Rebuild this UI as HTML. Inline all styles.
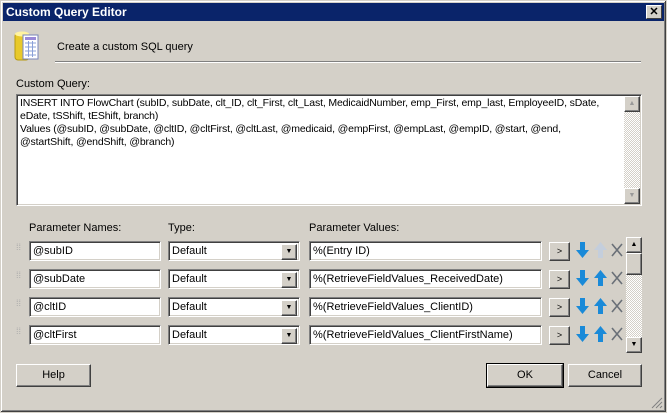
<!DOCTYPE html>
<html><head><meta charset="utf-8"><style>
*{box-sizing:border-box;margin:0;padding:0}
body{width:667px;height:413px;background:#d4d0c8;font:11px "Liberation Sans",Arial,sans-serif;color:#000;position:relative;overflow:hidden}
.a{position:absolute}
.win{position:absolute;left:0;top:0;width:667px;height:413px;border:1px solid #d4d0c8;box-shadow:inset -1px -1px #404040,inset 1px 1px #fff,inset -2px -2px #808080}
.title{left:3px;top:3px;width:661px;height:18px;background:#0a246a;color:#fff;font-weight:bold;font-size:12px;line-height:18px;padding-left:3px}
.close{right:5px;top:5px;width:16px;height:14px;background:#d4d0c8;border:1px solid;border-color:#fff #404040 #404040 #fff;color:#000;font-size:11px;line-height:12px;text-align:center;font-weight:bold}
.sunk{background:#fff;border:1px solid;border-color:#808080 #fff #fff #808080;box-shadow:inset 1px 1px #404040,inset -1px -1px #d4d0c8}
.btn{background:#d4d0c8;border:1px solid;border-color:#fff #404040 #404040 #fff;box-shadow:inset -1px -1px #808080;text-align:center}
.inp{height:20px;line-height:18px;padding-left:3px;font-size:11px}
.dd{position:absolute;right:2px;top:2px;width:16px;height:16px}
.sb{background:repeating-conic-gradient(#d4d0c8 0 25%,#fff 0 50%) 0 0/2px 2px}
.grip{color:#aaa;font-size:9px;line-height:4px;letter-spacing:0}
</style></head><body>
<div class="win"></div>
<div class="a title">Custom Query Editor</div>
<div class="a close">✕</div>
<svg class="a" style="left:13px;top:30px" width="34" height="34" viewBox="0 0 34 34">
<rect x="2" y="3" width="14" height="27" rx="3" fill="#e8c92a" stroke="#b89a10"/>
<ellipse cx="9" cy="4" rx="7" ry="2.5" fill="#fff3a0"/>
<rect x="10" y="5" width="15" height="24" fill="#fff" stroke="#7a86b8"/>
<rect x="12" y="7" width="11" height="3" fill="#9a8ad8"/>
<g stroke="#8aa0d8" stroke-width="1"><line x1="12" y1="13" x2="23" y2="13"/><line x1="12" y1="17" x2="23" y2="17"/><line x1="12" y1="21" x2="23" y2="21"/><line x1="12" y1="25" x2="23" y2="25"/><line x1="15.5" y1="11" x2="15.5" y2="27"/><line x1="19.5" y1="11" x2="19.5" y2="27"/></g>
</svg>
<div class="a" style="left:57px;top:41px">Create a custom SQL query</div>
<div class="a" style="left:55px;top:61px;width:586px;height:2px;border-top:1px solid #808080;border-bottom:1px solid #fff"></div>
<div class="a" style="left:16px;top:78px">Custom Query:</div>
<div class="a sunk" style="left:16px;top:94px;width:626px;height:112px;padding:2px 3px;line-height:13px;font-size:10.5px;letter-spacing:-0.15px;white-space:nowrap">INSERT INTO FlowChart (subID, subDate, clt_ID, clt_First, clt_Last, MedicaidNumber, emp_First, emp_last, EmployeeID, sDate,<br>eDate, tSShift, tEShift, branch)<br>Values (@subID, @subDate, @cltID, @cltFirst, @cltLast, @medicaid, @empFirst, @empLast, @empID, @start, @end,<br>@startShift, @endShift, @branch)</div>
<div class="a sb" style="left:624px;top:96px;width:16px;height:108px"></div>
<div class="a btn" style="left:624px;top:96px;width:16px;height:16px;font-size:7px;line-height:14px;color:#999">▲</div>
<div class="a btn" style="left:624px;top:188px;width:16px;height:16px;font-size:7px;line-height:14px;color:#999">▼</div>

<div class="a" style="left:29px;top:222px">Parameter Names:</div>
<div class="a" style="left:168px;top:222px">Type:</div>
<div class="a" style="left:309px;top:222px">Parameter Values:</div>

<div class="a sb" style="left:626px;top:237px;width:16px;height:116px"></div>
<div class="a btn" style="left:626px;top:237px;width:16px;height:16px;font-size:7px;line-height:14px">▲</div>
<div class="a btn" style="left:626px;top:253px;width:16px;height:22px"></div>
<div class="a btn" style="left:626px;top:337px;width:16px;height:16px;font-size:7px;line-height:14px">▼</div>

<div class="a grip" style="left:16px;top:245px">⁞⁞</div>
<div class="a sunk inp" style="left:29px;top:241px;width:132px">@subID</div>
<div class="a sunk inp" style="left:168px;top:241px;width:132px">Default<div class="dd btn" style="font-size:7px;line-height:14px">▼</div></div>
<div class="a sunk inp" style="left:309px;top:241px;width:233px">%(Entry ID)</div>
<div class="a btn" style="left:549px;top:242px;width:21px;height:19px;font-size:9px;line-height:17px">&gt;</div>

<div class="a grip" style="left:16px;top:273px">⁞⁞</div>
<div class="a sunk inp" style="left:29px;top:269px;width:132px">@subDate</div>
<div class="a sunk inp" style="left:168px;top:269px;width:132px">Default<div class="dd btn" style="font-size:7px;line-height:14px">▼</div></div>
<div class="a sunk inp" style="left:309px;top:269px;width:233px">%(RetrieveFieldValues_ReceivedDate)</div>
<div class="a btn" style="left:549px;top:270px;width:21px;height:19px;font-size:9px;line-height:17px">&gt;</div>

<div class="a grip" style="left:16px;top:301px">⁞⁞</div>
<div class="a sunk inp" style="left:29px;top:297px;width:132px">@cltID</div>
<div class="a sunk inp" style="left:168px;top:297px;width:132px">Default<div class="dd btn" style="font-size:7px;line-height:14px">▼</div></div>
<div class="a sunk inp" style="left:309px;top:297px;width:233px">%(RetrieveFieldValues_ClientID)</div>
<div class="a btn" style="left:549px;top:298px;width:21px;height:19px;font-size:9px;line-height:17px">&gt;</div>

<div class="a grip" style="left:16px;top:329px">⁞⁞</div>
<div class="a sunk inp" style="left:29px;top:325px;width:132px">@cltFirst</div>
<div class="a sunk inp" style="left:168px;top:325px;width:132px">Default<div class="dd btn" style="font-size:7px;line-height:14px">▼</div></div>
<div class="a sunk inp" style="left:309px;top:325px;width:233px">%(RetrieveFieldValues_ClientFirstName)</div>
<div class="a btn" style="left:549px;top:326px;width:21px;height:19px;font-size:9px;line-height:17px">&gt;</div>

<svg class="a" style="left:572px;top:240px" width="54" height="112" viewBox="0 0 54 112">
<g fill="#1a8ad8">
<path d="M8 2 h5 v8 h4 l-6.5 8 l-6.5 -8 h4 z"/><path d="M26 18 h5 v-8 h4 l-6.5 -8 l-6.5 8 h4 z" fill="#c4cedc"/>
<path d="M8 30 h5 v8 h4 l-6.5 8 l-6.5 -8 h4 z"/><path d="M26 46 h5 v-8 h4 l-6.5 -8 l-6.5 8 h4 z"/>
<path d="M8 58 h5 v8 h4 l-6.5 8 l-6.5 -8 h4 z"/><path d="M26 74 h5 v-8 h4 l-6.5 -8 l-6.5 8 h4 z"/>
<path d="M8 86 h5 v8 h4 l-6.5 8 l-6.5 -8 h4 z"/><path d="M26 102 h5 v-8 h4 l-6.5 -8 l-6.5 8 h4 z"/>
</g>
<g stroke="#6a7078" stroke-width="1.6" fill="none">
<path d="M40 4 L50 16 M50 4 L40 16"/>
<path d="M40 32 L50 44 M50 32 L40 44"/>
<path d="M40 60 L50 72 M50 60 L40 72"/>
<path d="M40 88 L50 100 M50 88 L40 100"/>
</g>
</svg>

<div class="a btn" style="left:16px;top:364px;width:75px;height:23px;line-height:21px">Help</div>
<div class="a btn" style="left:487px;top:364px;width:76px;height:23px;line-height:21px;outline:1px solid #000">OK</div>
<div class="a btn" style="left:568px;top:364px;width:74px;height:23px;line-height:21px">Cancel</div>
<svg class="a" style="left:651px;top:397px" width="12" height="12"><g stroke="#808080"><line x1="11" y1="1" x2="1" y2="11"/><line x1="11" y1="5" x2="5" y2="11"/><line x1="11" y1="9" x2="9" y2="11"/></g></svg>
</body></html>
